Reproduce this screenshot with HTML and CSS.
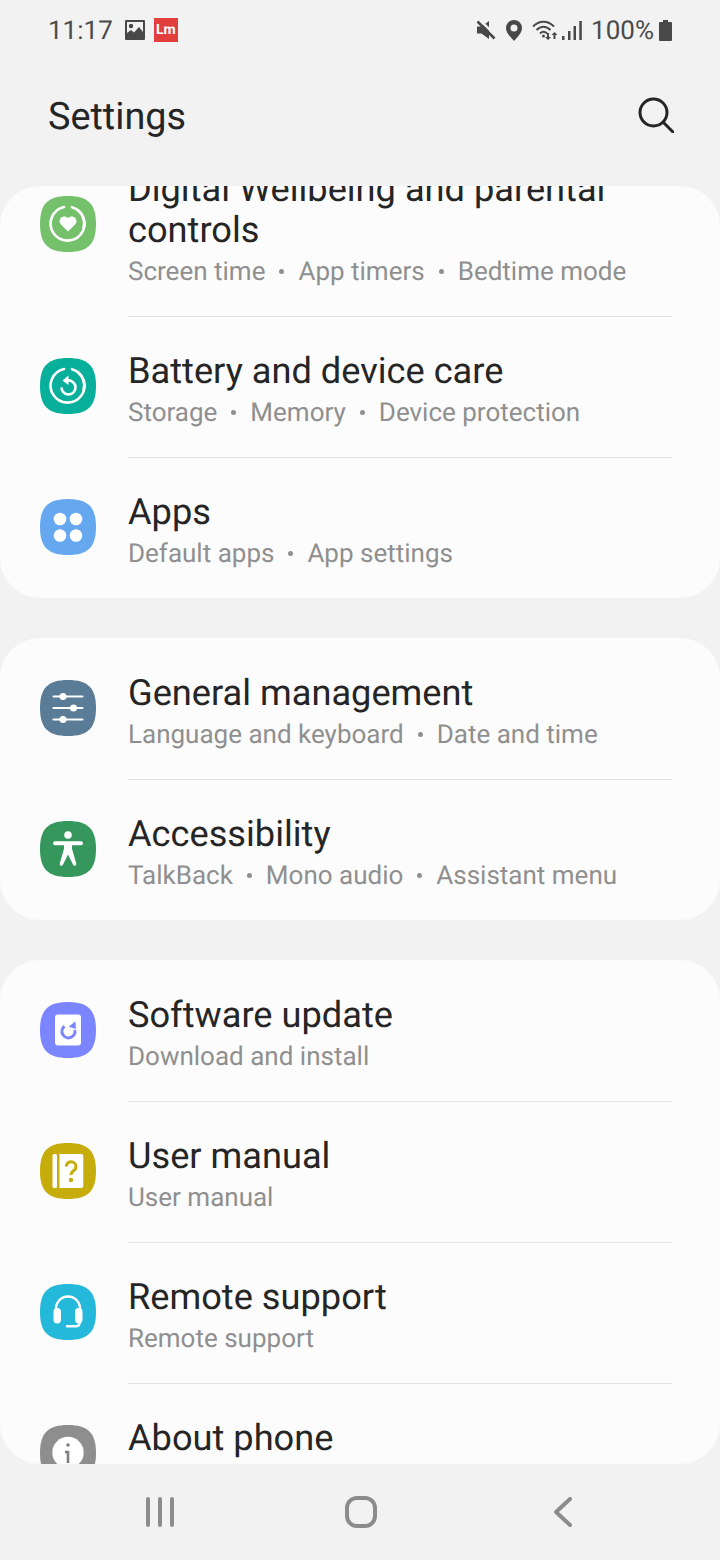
FILE: index.html
```html
<!DOCTYPE html>
<html lang="en">
<head>
<meta charset="utf-8">
<title>Settings</title>
<link rel="stylesheet" href="styles.css">
</head>
<body>
<div class="phone">
  <div class="status">
    <div class="status-left">
      <span class="clock">11:17</span>
      <svg class="st-img" viewBox="0 0 20 20"><path class="dark" fill-rule="evenodd" d="M1 0h18a1 1 0 0 1 1 1v18a1 1 0 0 1-1 1H1a1 1 0 0 1-1-1V1a1 1 0 0 1 1-1zM2 2v11l4-3 3 2.500 5-5.500 4 5V2z"/><circle class="dark" cx="6" cy="6" r="2.200"/></svg>
      <span class="lm">Lm</span>
    </div>
    <div class="status-right">
      <svg class="st-mute" viewBox="0 0 20 20"><path class="dark" d="M1 6.500h4.500L13 1v18l-7.500-5.500H1z"/><path class="slash-gap" d="M4 0l18 18"/><path class="slash" d="M1.500 1.500l17 17"/></svg>
      <svg class="st-pin" viewBox="0 0 18 21"><path class="dark" fill-rule="evenodd" d="M9 0a8 8 0 0 1 8 8c0 5-5 9.500-8 13C6 17.500 1 13 1 8a8 8 0 0 1 8-8zm0 4.500a3.500 3.500 0 1 0 0 7 3.500 3.500 0 0 0 0-7z"/></svg>
      <svg class="st-wifi" viewBox="0 0 26 22"><g class="thin"><path d="M1 7.500C7 1 16 1 22 7.500"/><path d="M4.500 11c4.500-4.500 9.500-4.500 14 0"/><path d="M8 14.500c2.500-2.500 4.500-2.500 7 0"/></g><circle class="dark" cx="11.500" cy="17" r="1.500"/><path class="dark" d="M15 14h2v4h2l-3 3-3-3h2zM22.500 13l3 3h-2v4h-2v-4h-2z"/></svg>
      <svg class="st-signal" viewBox="0 0 20 20"><rect class="dark" x="0" y="16" width="2.500" height="4"/><rect class="dark" x="6" y="11" width="2.500" height="9"/><rect class="dark" x="11.500" y="6" width="2.500" height="14"/><rect class="dark" x="17.300" y="1" width="2.500" height="19"/></svg>
      <span class="pct">100%</span>
      <svg class="st-batt" viewBox="0 0 13 21"><path class="dark" d="M4 0h5v2h3a1 1 0 0 1 1 1v17a1 1 0 0 1-1 1H1a1 1 0 0 1-1-1V3a1 1 0 0 1 1-1h3z"/></svg>
    </div>
  </div>

  <header class="header">
    <h1 class="title">Settings</h1>
    <svg class="search" viewBox="0 0 36 36"><circle cx="15.500" cy="15.500" r="13.500"/><path d="M25.500 25.500L35 35"/></svg>
  </header>

  <main class="scroller">
    <div class="list">
      <section class="card">
        <div class="row row-tall">
          <svg class="icon" viewBox="0 0 56 56"><path class="sq wellbeing" d="M28 0C48 0 56 8 56 28S48 56 28 56 0 48 0 28 8 0 28 0z"/><path class="ring" d="M32 11.200A17 17 0 1 1 24 11"/><path class="ring" d="M38 14.500A16.500 16.500 0 0 1 43.500 32"/><path class="fw" d="M28 35.500l-7.500-7.500a4.700 4.700 0 0 1 7.500-5.700 4.700 4.700 0 0 1 7.500 5.700z"/></svg>
          <div class="text">
            <div class="name">Digital Wellbeing and parental controls</div>
            <div class="sub"><span>Screen time</span><span>App timers</span><span>Bedtime mode</span></div>
          </div>
        </div>
        <div class="row">
          <svg class="icon" viewBox="0 0 56 56"><path class="sq battery" d="M28 0C48 0 56 8 56 28S48 56 28 56 0 48 0 28 8 0 28 0z"/><path class="ring" d="M32 11.200A17 17 0 1 1 24 11"/><path class="ring" d="M38 14.500A16.500 16.500 0 0 1 43.500 32"/><path class="thick" d="M21.500 29.500a7 7 0 1 0 6-7h-2"/><path class="fw" d="M28.500 17.500l-6 5 6 4.500z"/></svg>
          <div class="text">
            <div class="name">Battery and device care</div>
            <div class="sub"><span>Storage</span><span>Memory</span><span>Device protection</span></div>
          </div>
        </div>
        <div class="row">
          <svg class="icon" viewBox="0 0 56 56"><path class="sq apps" d="M28 0C48 0 56 8 56 28S48 56 28 56 0 48 0 28 8 0 28 0z"/><circle class="fw" cx="20" cy="20" r="6.300"/><circle class="fw" cx="36" cy="20" r="6.300"/><circle class="fw" cx="20" cy="36.500" r="6.300"/><circle class="fw" cx="36" cy="36.500" r="6.300"/></svg>
          <div class="text">
            <div class="name">Apps</div>
            <div class="sub"><span>Default apps</span><span>App settings</span></div>
          </div>
        </div>
      </section>

      <section class="card">
        <div class="row">
          <svg class="icon" viewBox="0 0 56 56"><path class="sq general" d="M28 0C48 0 56 8 56 28S48 56 28 56 0 48 0 28 8 0 28 0z"/><path class="line" d="M13.500 16.500h29M13.500 28h29M13.500 39.500h29"/><circle class="fw" cx="23" cy="16.500" r="3.500"/><circle class="fw" cx="33.500" cy="28" r="3.500"/><circle class="fw" cx="23" cy="39.500" r="3.500"/></svg>
          <div class="text">
            <div class="name">General management</div>
            <div class="sub"><span>Language and keyboard</span><span>Date and time</span></div>
          </div>
        </div>
        <div class="row">
          <svg class="icon" viewBox="0 0 56 56"><path class="sq access" d="M28 0C48 0 56 8 56 28S48 56 28 56 0 48 0 28 8 0 28 0z"/><circle class="fw" cx="28" cy="14" r="3.800"/><path class="fw" d="M15 20.300h26a2 2 0 0 1 0 4h-9v3.500l4.300 15a1.700 1.700 0 0 1-3.200 1L28 33.500 22.900 43.800a1.700 1.700 0 0 1-3.200-1l4.300-15v-3.500h-9a2 2 0 0 1 0-4z"/></svg>
          <div class="text">
            <div class="name">Accessibility</div>
            <div class="sub"><span>TalkBack</span><span>Mono audio</span><span>Assistant menu</span></div>
          </div>
        </div>
      </section>

      <section class="card">
        <div class="row">
          <svg class="icon" viewBox="0 0 56 56"><path class="sq software" d="M28 0C48 0 56 8 56 28S48 56 28 56 0 48 0 28 8 0 28 0z"/><rect class="fw" x="15" y="12.500" width="26" height="31" rx="3"/><path class="arrow" d="M24.500 24.200A6.500 6.500 0 1 0 34.800 28"/><path class="arrow-head" d="M28.700 24.700l6.600-5.400.7 7.700z"/></svg>
          <div class="text">
            <div class="name">Software update</div>
            <div class="sub"><span>Download and install</span></div>
          </div>
        </div>
        <div class="row">
          <svg class="icon" viewBox="0 0 56 56"><path class="sq manual" d="M28 0C48 0 56 8 56 28S48 56 28 56 0 48 0 28 8 0 28 0z"/><rect class="fw" x="12.500" y="11" width="4.500" height="34" rx="1.500"/><path class="fw" d="M19.500 11H41a2.300 2.300 0 0 1 2.300 2.300v29.400A2.300 2.300 0 0 1 41 45H19.500z"/><path class="qmark" d="M26.300 23.500a4.800 4.800 0 1 1 7.500 4c-1.800 1.300-2.800 2.200-2.800 4.500"/><circle class="qdot" cx="31" cy="37" r="2.200"/></svg>
          <div class="text">
            <div class="name">User manual</div>
            <div class="sub"><span>User manual</span></div>
          </div>
        </div>
        <div class="row">
          <svg class="icon" viewBox="0 0 56 56"><path class="sq remote" d="M28 0C48 0 56 8 56 28S48 56 28 56 0 48 0 28 8 0 28 0z"/><path class="band" d="M16 28v-3.500a12 12 0 0 1 24 0V28"/><rect class="fw" x="13.500" y="24" width="7.500" height="15.500" rx="3.700"/><rect class="fw" x="35" y="24" width="7.500" height="15.500" rx="3.700"/><path class="band" d="M39.500 39c0 2.500-1.500 3.300-4 3.300H27"/></svg>
          <div class="text">
            <div class="name">Remote support</div>
            <div class="sub"><span>Remote support</span></div>
          </div>
        </div>
        <div class="row">
          <svg class="icon" viewBox="0 0 56 56"><path class="sq about" d="M28 0C48 0 56 8 56 28S48 56 28 56 0 48 0 28 8 0 28 0z"/><circle class="fw" cx="28" cy="27.500" r="15.700"/><circle class="idot" cx="28" cy="20" r="1.800"/><path class="istem" d="M25 27h3v11"/></svg>
          <div class="text">
            <div class="name">About phone</div>
          </div>
        </div>
      </section>
    </div>
  </main>

  <nav class="navbar">
    <svg class="nav-recents" viewBox="0 0 28 30"><path d="M2 2v26M14 2v26M26 2v26"/></svg>
    <svg class="nav-home" viewBox="0 0 32 32"><rect x="2" y="2" width="28" height="28" rx="10"/></svg>
    <svg class="nav-back" viewBox="0 0 18 30"><path d="M16 2L2 15l14 13"/></svg>
  </nav>
</div>
</body>
</html>
```
FILE: styles.css
```css
* { box-sizing: border-box; }
html, body { margin: 0; padding: 0; }
body { background: #f2f2f2; font-family: Roboto, "Noto Sans", sans-serif; text-rendering: geometricPrecision; }
.phone { width: 720px; height: 1560px; display: flex; flex-direction: column; overflow: hidden; background: #f2f2f2; }

.status { height: 60px; padding: 0 48px; display: flex; align-items: center; justify-content: space-between; color: #4a4a4a; flex: none; }
.status-left, .status-right { display: flex; align-items: center; }
.clock { font-size: 26px; line-height: 60px; padding-top: 2px; }
.pct { font-size: 26px; line-height: 60px; padding-top: 2px; margin-left: 9px; }
.dark { fill: #484848; }
.slash { stroke: #484848; stroke-width: 2.500; fill: none; }
.slash-gap { stroke: #f2f2f2; stroke-width: 2.500; fill: none; }
.thin { stroke: #484848; stroke-width: 2; fill: none; }
.st-img { width: 20px; height: 20px; margin-left: 12px; }
.lm { width: 24px; height: 24px; margin-left: 9px; background: #e23e3e; color: #fff; font-size: 14px; font-weight: 700; line-height: 24px; text-align: center; }
.st-mute { width: 20px; height: 20px; }
.st-pin { width: 18px; height: 21px; margin-left: 9px; }
.st-wifi { width: 26px; height: 22px; margin-left: 9px; }
.st-signal { width: 20px; height: 20px; margin-left: 4px; }
.st-batt { width: 13px; height: 21px; margin-left: 5px; }

.header { height: 126px; padding: 0 46px 0 48px; display: flex; justify-content: space-between; align-items: flex-start; flex: none; }
.title { margin: 34px 0 0; font-size: 37.800px; font-weight: 400; line-height: 46px; color: #252525; }
.search { width: 36px; height: 36px; margin-top: 37px; fill: none; stroke: #252525; stroke-width: 3; stroke-linecap: round; }

.scroller { height: 1278px; flex: none; border-radius: 40px; overflow: hidden; }
.list { margin-top: -52px; display: flex; flex-direction: column; gap: 40px; }
.card { background: #fcfcfc; border-radius: 40px; padding-top: 1px; }

.row { display: flex; padding-left: 40px; }
.icon { width: 56px; height: 56px; flex: none; margin: 41px 32px 0 0; }
.row-tall .icon { margin-top: 61px; }
.text { flex: 1; margin-right: 48px; padding: 33px 0 27px; border-bottom: 1px solid #e4e4e4; }
.row:last-child .text { border-bottom: 0; }
.name { font-size: 36.200px; line-height: 41px; color: #252525; margin-bottom: 6px; }
.sub { font-size: 26px; line-height: 33px; color: #8f8f8f; }
.sub span + span::before { content: ""; display: inline-block; width: 5px; height: 5px; border-radius: 50%; background: #8f8f8f; margin: 0 14px; vertical-align: 6px; }

.sq.wellbeing { fill: #75c16b; }
.sq.battery { fill: #08b09c; }
.sq.apps { fill: #66a8f0; }
.sq.general { fill: #5b7c96; }
.sq.access { fill: #35975c; }
.sq.software { fill: #7b85ff; }
.sq.manual { fill: #c7ad0b; }
.sq.remote { fill: #24b8da; }
.sq.about { fill: #8e8e8e; }
.fw { fill: #fff; }
.ring { fill: none; stroke: #fff; stroke-width: 2.600; stroke-linecap: round; }
.thick { fill: none; stroke: #fff; stroke-width: 2.600; }
.line { fill: none; stroke: #fff; stroke-width: 2.200; stroke-linecap: round; }
.band { fill: none; stroke: #fff; stroke-width: 2.400; stroke-linecap: round; }
.arrow { fill: none; stroke: #7b85ff; stroke-width: 3; }
.arrow-head { fill: #7b85ff; }
.qmark { fill: none; stroke: #c7ad0b; stroke-width: 3; }
.qdot { fill: #c7ad0b; }
.idot { fill: #7f7f7f; }
.istem { fill: none; stroke: #7f7f7f; stroke-width: 2.600; }

.navbar { flex: 1; display: flex; justify-content: space-between; align-items: center; padding: 0 148px 0 146px; }
.nav-recents { width: 28px; height: 30px; fill: none; stroke: #8c8c8c; stroke-width: 4; stroke-linecap: round; }
.nav-home { width: 32px; height: 32px; margin-right: 6px; fill: none; stroke: #8c8c8c; stroke-width: 4; }
.nav-back { width: 18px; height: 30px; fill: none; stroke: #8c8c8c; stroke-width: 4; stroke-linecap: round; stroke-linejoin: round; }
```
